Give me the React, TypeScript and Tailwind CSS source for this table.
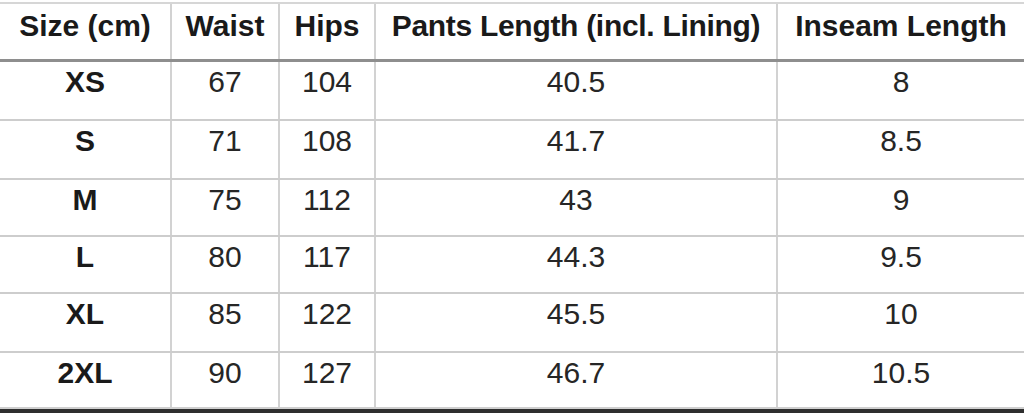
const headers = ["Size (cm)", "Waist", "Hips", "Pants Length (incl. Lining)", "Inseam Length"];

const rows = [
  { size: "XS", waist: "67", hips: "104", pants: "40.5", inseam: "8", h: "h-[60px]" },
  { size: "S", waist: "71", hips: "108", pants: "41.7", inseam: "8.5", h: "h-[59px]" },
  { size: "M", waist: "75", hips: "112", pants: "43", inseam: "9", h: "h-[57px]" },
  { size: "L", waist: "80", hips: "117", pants: "44.3", inseam: "9.5", h: "h-[57px]" },
  { size: "XL", waist: "85", hips: "122", pants: "45.5", inseam: "10", h: "h-[59px]" },
  { size: "2XL", waist: "90", hips: "127", pants: "46.7", inseam: "10.5", h: "h-[56px]" },
];

const grid = "grid grid-cols-[172px_108px_96px_402px_1fr]";
const cell = "border-r-2 border-[#d2d2d2] text-center";

export default function App() {
  return (
    <div className="w-[1024px] h-[413px] overflow-hidden bg-white pt-[2px] font-['Liberation_Sans',Arial,sans-serif] text-[30px] leading-[34px] text-[#262626]">
      {/* Header */}
      <div className={`${grid} h-[57px] border-t-2 border-[#d6d6d6] font-bold text-[#1a1a1a]`}>
        {headers.map((label, i) => (
          <div
            key={label}
            className={`pt-[5px] text-center ${i === 3 ? "tracking-[-0.3px]" : ""} ${i < 4 ? "border-r-2 border-[#d2d2d2]" : ""}`}
          >
            {label}
          </div>
        ))}
      </div>

      {/* Body */}
      {rows.map((r, idx) => (
        <div
          key={r.size}
          className={`${grid} ${r.h} ${idx === 0 ? "border-t-[3px] border-[#8e8e8e]" : "border-t-2 border-[#cdcdcd]"}`}
        >
          <div className={`${cell} pt-[3px] font-bold text-[#1a1a1a]`}>{r.size}</div>
          <div className={`${cell} pt-[3px]`}>{r.waist}</div>
          <div className={`${cell} pt-[3px]`}>{r.hips}</div>
          <div className={`${cell} pt-[3px]`}>{r.pants}</div>
          <div className="pt-[3px] text-center">{r.inseam}</div>
        </div>
      ))}

      <div className="h-[2px] bg-[#cfcfcf]" />
      <div className="h-[4px] bg-[#2e2e2e]" />
    </div>
  );
}
